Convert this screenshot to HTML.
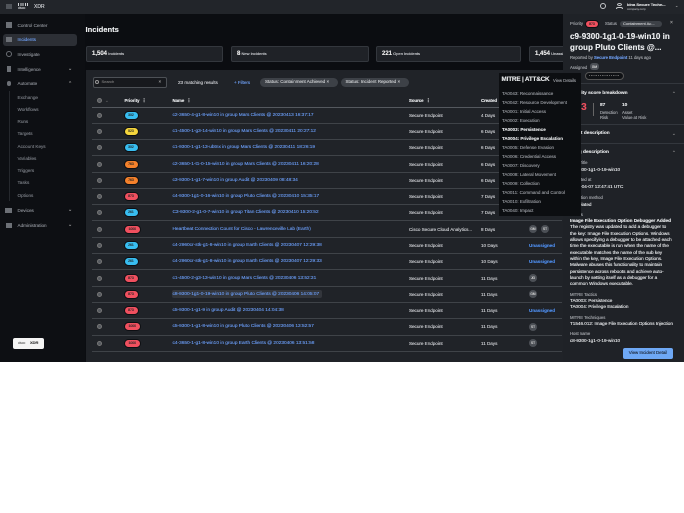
<!DOCTYPE html>
<html><head><meta charset="utf-8">
<style>
html,body{margin:0;padding:0;background:#fff;width:684px;height:513px;overflow:hidden}
#a{position:absolute;left:0;top:0;width:684px;height:362px;overflow:hidden;background:#0b0d11;font-family:"Liberation Sans",sans-serif;font-size:4.5px;color:#d8dade;filter:blur(.2px);-webkit-text-stroke:.12px currentColor}
#a div,#a span.p{position:absolute;white-space:nowrap}
.top{left:0;top:0;width:684px;height:14px;background:#22252a}
.side{left:0;top:14px;width:85px;height:348px;background:#0d0f13}
.n{left:17.5px;color:#8b8f96;font-size:4.6px}
.s{left:17.5px;color:#7b7f86;font-size:4.6px}
.card{top:46px;height:15.5px;background:#1f2227;border:1px solid #33373d;border-radius:2px;box-sizing:border-box;font-size:4px;line-height:13px;padding-left:5px;color:#d0d2d6}
.card b{font-size:6px;color:#eee}
.main{left:86px;top:70px;width:500px;height:292px;background:#202328}
.l{left:92px;width:470px;height:1.3px;background:#3f4348}
.cb{left:97px;width:5px;height:5px;border-radius:50%;background:#54585e;border:.5px solid #777;box-sizing:border-box}
.pill{left:124.5px;width:13px;height:7px;border-radius:4px;color:#222;font-size:3.4px;line-height:7px;text-align:center;box-shadow:0 0 0 1px #0d0f13}
.w{left:124.5px;width:15.5px}
.bl{background:#38bdf0}.ye{background:#f4d53c}.or{background:#f5812b}.re{background:#f0505f}
.t{left:172.5px;color:#6a9cf5;font-size:4.75px}
.so{left:409px;color:#d2d4d8;font-size:4.55px}
.d{left:481px;color:#d2d4d8;font-size:4.55px}
.un{left:529px;color:#4f8ff0;font-weight:bold;font-size:4.6px}
.av{width:8px;height:8px;border-radius:50%;background:#4c5056;color:#ddd;font-size:3.2px;line-height:8px;text-align:center}
.hd{top:98px;color:#eceef0;font-weight:bold;font-size:4.3px}
.chip{top:78px;height:8.5px;background:#3d4147;border-radius:4.5px;font-size:4.5px;line-height:8.5px;padding:0 5px;color:#cfd1d4;box-sizing:border-box}
.mitre{left:499px;top:73px;width:82px;height:143px;background:#0c0e11}
.m{left:502px;color:#9a9da3;font-size:4.5px}
.dr{left:563px;top:14px;width:121px;height:348px;background:#1f2227}
.x{left:570px;color:#e8eaec;font-size:4.6px}
.g{left:570px;color:#a6a9ae;font-size:4.2px}
.sep{left:563px;width:121px;height:1px;background:#33373d}
</style></head><body>
<div id="a">
<div class="top"></div>
<div class="side"></div>
<div style="left:6px;top:4px;width:6px;height:5px;background:#50545a"></div>
<div style="left:18px;top:3px;width:11px;height:3px;background:repeating-linear-gradient(90deg,#cfd1d4 0 .8px,transparent .8px 1.8px)"></div>
<div style="left:18px;top:6px;font-size:3.2px;color:#cfd1d4">cisco</div>
<div style="left:34px;top:3.5px;font-size:5px;color:#d8dade">XDR</div>
<div style="left:600px;top:3px;width:6px;height:6px;border:1px solid #c5c7ca;border-radius:50%;box-sizing:border-box"></div>
<div style="left:617px;top:3px;width:5px;height:3px;border:1px solid #c5c7ca;border-radius:50%;box-sizing:border-box"></div>
<div style="left:616px;top:6.5px;width:7px;height:2.5px;border:1px solid #c5c7ca;border-bottom:0;border-radius:3px 3px 0 0;box-sizing:border-box"></div>
<div style="left:627px;top:1.5px;font-size:4px;font-weight:bold;color:#e0e2e4">Idna Secure Techn...</div>
<div style="left:627px;top:6.5px;font-size:3px;color:#9a9da2">company.corp</div>
<div style="left:675px;top:3px;font-size:4px;color:#aaa">⌄</div>

<div style="left:3px;top:33.5px;width:74px;height:12.5px;background:#2c2f35;border-radius:3px"></div>
<div style="left:6px;top:22px;width:6px;height:6px;background:#6c7076"></div>
<div style="left:6px;top:37px;width:6px;height:5px;background:#6c7076"></div>
<div style="left:6px;top:51px;width:6px;height:6px;border:1px solid #6c7076;border-radius:50%;box-sizing:border-box"></div>
<div style="left:7px;top:66px;width:4px;height:6px;background:#6c7076"></div>
<div style="left:7px;top:81px;width:4px;height:5px;background:#6c7076;border-radius:2px"></div>
<div style="left:5px;top:208px;width:7px;height:5px;background:#6c7076"></div>
<div style="left:6px;top:223px;width:6px;height:5px;background:#6c7076"></div>
<div class="n" style="top:22.5px">Control Center</div>
<div class="n" style="top:37px;color:#6d9df0">Incidents</div>
<div class="n" style="top:51.5px">Investigate</div>
<div class="n" style="top:66.5px">Intelligence</div>
<div style="left:68px;top:66px;color:#aaa;font-size:5px">⌄</div>
<div class="n" style="top:81px">Automate</div>
<div style="left:68px;top:81px;color:#aaa;font-size:5px">⌃</div>
<div style="left:8.5px;top:91px;width:1px;height:110px;background:#25282d"></div>
<div class="s" style="top:94.5px">Exchange</div>
<div class="s" style="top:106.5px">Workflows</div>
<div class="s" style="top:119px">Runs</div>
<div class="s" style="top:131px">Targets</div>
<div class="s" style="top:143.5px">Account Keys</div>
<div class="s" style="top:155.5px">Variables</div>
<div class="s" style="top:168px">Triggers</div>
<div class="s" style="top:180px">Tasks</div>
<div class="s" style="top:192.5px">Options</div>
<div class="n" style="top:208px">Devices</div>
<div style="left:68px;top:207px;color:#aaa;font-size:5px">⌄</div>
<div class="n" style="top:223px">Administration</div>
<div style="left:68px;top:222px;color:#aaa;font-size:5px">⌄</div>
<div style="left:13px;top:337.5px;width:31px;height:11px;background:#f4f4f4;border-radius:2px"></div>
<div style="left:18px;top:340.5px;font-size:3.2px;color:#666">cisco</div>
<div style="left:30px;top:340px;font-size:4px;color:#333;font-weight:bold">XDR</div>

<div style="left:85.5px;top:25px;font-size:7.6px;font-weight:bold;color:#eef0f2">Incidents</div>
<div class="card" style="left:86px;width:137px"><b>1,504</b> Incidents</div>
<div class="card" style="left:231px;width:138px"><b>8</b> New Incidents</div>
<div class="card" style="left:376px;width:145px"><b>221</b> Open Incidents</div>
<div class="card" style="left:529px;width:40px"><b>1,454</b> Unassigned</div>

<div class="main"></div>
<div style="left:92.5px;top:77px;width:74px;height:10.5px;background:#17191d;border:1px solid #4d5156;border-radius:2px;box-sizing:border-box;color:#777;line-height:8.5px;padding-left:8px;font-size:4px">Search</div>
<div style="left:95px;top:80px;width:4px;height:4px;border:.7px solid #999;border-radius:50%;box-sizing:border-box"></div>
<div style="left:158.5px;top:79px;font-size:4.5px;color:#aaa">×</div>
<div style="left:178px;top:79.5px;color:#d2d4d8;font-size:4.6px">23 matching results</div>
<div style="left:234px;top:79.5px;color:#6d9df0;font-size:4.5px">+ Filters</div>
<div class="chip" style="left:260px;width:78px">Status: Containment Achieved ×</div>
<div class="chip" style="left:340.5px;width:68px">Status: Incident Reported ×</div>

<div class="cb" style="top:98px"></div>
<div style="left:105px;top:98px;color:#666">⌄</div>
<div class="hd" style="left:124.5px">Priority &nbsp;⋮</div>
<div class="hd" style="left:172.5px">Name &nbsp;⋮</div>
<div class="hd" style="left:409px">Source &nbsp;⋮</div>
<div class="hd" style="left:481px">Created</div>
<div class="l" style="top:106.5px;background:#54585e"></div>

<div class="l" style="top:122.5px"></div><div class="l" style="top:139px"></div><div class="l" style="top:155px"></div><div class="l" style="top:171.5px"></div><div class="l" style="top:187.5px"></div><div class="l" style="top:204px"></div><div class="l" style="top:220px"></div><div class="l" style="top:236.5px"></div><div class="l" style="top:253px"></div><div class="l" style="top:269px"></div><div class="l" style="top:285.5px"></div><div class="l" style="top:301.5px"></div><div class="l" style="top:318px"></div><div class="l" style="top:334.5px"></div><div class="l" style="top:351px"></div>

<div class="cb" style="top:112.5px"></div><div class="pill bl" style="top:111.5px">302</div><div class="t" style="top:112.5px">c2-3650-4-g1-8-win10 in group Mars Clients @ 20230413 16:37:17</div><div class="so" style="top:112.5px">Secure Endpoint</div><div class="d" style="top:112.5px">4 Days</div>
<div class="cb" style="top:129px"></div><div class="pill ye" style="top:128px">523</div><div class="t" style="top:129px">c1-4500-1-g3-14-win10 in group Mars Clients @ 20230411 20:27:12</div><div class="so" style="top:129px">Secure Endpoint</div><div class="d" style="top:129px">6 Days</div>
<div class="cb" style="top:145px"></div><div class="pill bl" style="top:144px">302</div><div class="t" style="top:145px">c1-9300-1-g1-13-ubtnx in group Mars Clients @ 20230411 18:26:19</div><div class="so" style="top:145px">Secure Endpoint</div><div class="d" style="top:145px">6 Days</div>
<div class="cb" style="top:161.5px"></div><div class="pill or" style="top:160.5px">763</div><div class="t" style="top:161.5px">c2-3650-1-t1-0-15-win10 in group Mars Clients @ 20230411 16:20:28</div><div class="so" style="top:161.5px">Secure Endpoint</div><div class="d" style="top:161.5px">6 Days</div>
<div class="cb" style="top:177.5px"></div><div class="pill or" style="top:176.5px">763</div><div class="t" style="top:177.5px">c3-9300-1-g1-7-win10 in group Audit @ 20230409 08:48:34</div><div class="so" style="top:177.5px">Secure Endpoint</div><div class="d" style="top:177.5px">6 Days</div>
<div class="cb" style="top:194px"></div><div class="pill re" style="top:193px">873</div><div class="t" style="top:194px">c4-9300-1g1-0-16-win10 in group Pluto Clients @ 20230410 15:35:17</div><div class="so" style="top:194px">Secure Endpoint</div><div class="d" style="top:194px">7 Days</div>
<div class="cb" style="top:210px"></div><div class="pill bl" style="top:209px">261</div><div class="t" style="top:210px">C3-9300-2-g1-0-7-win10 in group Titan Clients @ 20230410 15:20:52</div><div class="so" style="top:210px">Secure Endpoint</div><div class="d" style="top:210px">7 Days</div>
<div class="cb" style="top:226.5px"></div><div class="pill re w" style="top:225.5px">1000</div><div class="t" style="top:226.5px">Heartbeat Connection Count for Cisco - Lawrenceville Lab (Earth)</div><div class="so" style="top:226.5px">Cisco Secure Cloud Analytics...</div><div class="d" style="top:226.5px">8 Days</div><div class="av" style="left:529px;top:225px">GM</div><div class="av" style="left:541px;top:225px">ST</div>
<div class="cb" style="top:243px"></div><div class="pill bl" style="top:242px">261</div><div class="t" style="top:243px">c4-2960cr-stk-g1-8-win10 in group Earth Clients @ 20230407 12:29:38</div><div class="so" style="top:243px">Secure Endpoint</div><div class="d" style="top:243px">10 Days</div><div class="un" style="top:243px">Unassigned</div>
<div class="cb" style="top:259px"></div><div class="pill bl" style="top:258px">261</div><div class="t" style="top:259px">c4-2960cr-stk-g1-8-win10 in group Earth Clients @ 20230407 12:29:33</div><div class="so" style="top:259px">Secure Endpoint</div><div class="d" style="top:259px">10 Days</div><div class="un" style="top:259px">Unassigned</div>
<div class="cb" style="top:275.5px"></div><div class="pill re" style="top:274.5px">873</div><div class="t" style="top:275.5px">c1-4500-2-g3-13-win10 in group Mars Clients @ 20230406 13:52:31</div><div class="so" style="top:275.5px">Secure Endpoint</div><div class="d" style="top:275.5px">11 Days</div><div class="av" style="left:529px;top:274px">JG</div>
<div class="cb" style="top:291.5px"></div><div class="pill re" style="top:290.5px">873</div><div style="left:172px;top:290px;width:150px;height:7.5px;background:#33363c;border-radius:2px"></div><div class="t" style="top:291.5px">c8-9300-1g1-0-19-win10 in group Pluto Clients @ 20230406 14:05:07</div><div class="so" style="top:291.5px">Secure Endpoint</div><div class="d" style="top:291.5px">11 Days</div><div class="av" style="left:529px;top:290px">GM</div>
<div class="cb" style="top:308px"></div><div class="pill re" style="top:307px">873</div><div class="t" style="top:308px">c5-9300-1-g1-9 in group Audit @ 20230404 14:04:38</div><div class="so" style="top:308px">Secure Endpoint</div><div class="d" style="top:308px">11 Days</div><div class="un" style="top:308px">Unassigned</div>
<div class="cb" style="top:324px"></div><div class="pill re w" style="top:323px">1000</div><div class="t" style="top:324px">c5-9300-1-g1-8-win10 in group Pluto Clients @ 20230406 13:52:57</div><div class="so" style="top:324px">Secure Endpoint</div><div class="d" style="top:324px">11 Days</div><div class="av" style="left:529px;top:323px">ST</div>
<div class="cb" style="top:340.5px"></div><div class="pill re w" style="top:339.5px">1000</div><div class="t" style="top:340.5px">c4-3650-1-g1-8-win10 in group Earth Clients @ 20230406 13:51:58</div><div class="so" style="top:340.5px">Secure Endpoint</div><div class="d" style="top:340.5px">11 Days</div><div class="av" style="left:529px;top:339px">ST</div>

<div class="dr"></div>
<div class="g" style="top:21px">Priority</div>
<div class="pill re" style="left:586px;top:20.5px;width:12px;height:6px;line-height:6px">873</div>
<div class="g" style="left:605px;top:21px">Status</div>
<div style="left:620px;top:20.5px;width:42px;height:6.5px;border-radius:3px;background:#3d4147;color:#c8cacd;font-size:4px;line-height:6.5px;padding-left:3px;box-sizing:border-box">Containment Ac...</div>
<div style="left:670px;top:20px;color:#aaa;font-size:5px">×</div>
<div style="left:570px;top:30.5px;font-size:8.1px;font-weight:bold;color:#eef0f2;line-height:11px">c9-9300-1g1-0-19-win10 in<br>group Pluto Clients @...</div>
<div class="g" style="top:55px">Reported by <span style="color:#6d9df0;font-weight:bold">Secure Endpoint</span> 11 days ago</div>
<div class="g" style="top:64.5px">Assigned</div>
<div class="av" style="left:590px;top:63px;width:9px;height:7px;border-radius:3px">GM</div>
<div style="left:585px;top:72px;width:39px;height:8px;background:#101215;border:.7px solid #555;border-radius:4px;box-sizing:border-box"></div>
<div style="left:589px;top:75px;width:31px;height:1.3px;background:repeating-linear-gradient(90deg,#666 0 1.2px,transparent 1.2px 2.2px)"></div>
<div class="sep" style="top:83px"></div>
<div style="left:570px;top:91px;font-size:4.8px;font-weight:bold;color:#e4e6e8">Priority score breakdown</div>
<div style="left:672px;top:91px;color:#999;font-size:4.5px">⌃</div>
<div style="left:570px;top:102px;font-size:10px;font-weight:bold;color:#f0505f">873</div>
<div style="left:593px;top:103px;width:1px;height:13px;background:#666"></div>
<div style="left:600px;top:103px;font-weight:bold;font-size:4.8px;color:#e4e6e8">87</div>
<div style="left:622px;top:103px;font-weight:bold;font-size:4.8px;color:#e4e6e8">10</div>
<div class="g" style="left:600px;top:110px;line-height:5px">Detection<br>Risk</div>
<div class="g" style="left:622px;top:110px;line-height:5px">Asset<br>Value at Risk</div>
<div class="sep" style="top:124px"></div>
<div style="left:570px;top:131px;font-size:4.8px;font-weight:bold;color:#e4e6e8">Short description</div>
<div style="left:672px;top:131px;color:#999;font-size:4.5px">⌄</div>
<div class="sep" style="top:143px"></div>
<div style="left:570px;top:150px;font-size:4.8px;font-weight:bold;color:#e4e6e8">Long description</div>
<div style="left:672px;top:150px;color:#999;font-size:4.5px">⌃</div>
<div class="g" style="top:160px">Host Title</div>
<div class="x" style="top:167px">c9-9300-1g1-0-19-win10</div>
<div class="g" style="top:177px">Detected at</div>
<div class="x" style="top:184px">2023-04-07 12:47:41 UTC</div>
<div class="g" style="top:195px">Detection method</div>
<div class="x" style="top:201.5px">Correlated</div>
<div class="g" style="top:212px">Details</div>
<div class="x" style="top:218px;line-height:6.35px;font-size:4.65px"><b>Image File Execution Option Debugger Added</b><br>The registry was updated to add a debugger to<br>the key: Image File Execution Options. Windows<br>allows specifying a debugger to be attached each<br>time the executable is run when the name of the<br>executable matches the name of the sub key<br>within the key, Image File Execution Options.<br>Malware abuses this functionality to maintain<br>persistence across reboots and achieve auto-<br>launch by setting itself as a debugger for a<br>common Windows executable.</div>
<div class="g" style="top:291.5px">MITRE Tactics</div>
<div class="x" style="top:297.5px;line-height:6.4px">TA0003: Persistence<br>TA0004: Privilege Escalation</div>
<div class="g" style="top:314.5px">MITRE Techniques</div>
<div class="x" style="top:320.5px">T1546.012: Image File Execution Options Injection</div>
<div class="g" style="top:331px">Host name</div>
<div class="x" style="top:337.5px">c8-9300-1g1-0-19-win10</div>
<div class="sep" style="top:343.5px"></div>
<div style="left:563px;top:344px;width:121px;height:18px;background:#1f2227"></div>
<div style="left:623px;top:348px;width:50px;height:10.5px;background:#6ea8f5;border-radius:2px;color:#1a2433;font-size:4.4px;line-height:10.5px;text-align:center">View Incident Detail</div>

<div class="mitre"></div>
<div style="left:501.5px;top:76px;font-size:6.4px;font-weight:bold;color:#e8eaec;letter-spacing:-.2px">MITRE | ATT&amp;CK</div>
<div style="left:553px;top:77.5px;color:#9a9da2;font-size:4.2px">View Details</div>
<div class="m" style="top:90.5px">TA0043: Reconnaissance</div>
<div class="m" style="top:99.5px">TA0042: Resource Development</div>
<div class="m" style="top:108.5px">TA0001: Initial Access</div>
<div class="m" style="top:117.5px">TA0002: Execution</div>
<div class="m" style="top:126.5px;color:#e4e6e8;font-weight:bold">TA0003: Persistence</div>
<div class="m" style="top:135.5px;color:#e4e6e8;font-weight:bold">TA0004: Privilege Escalation</div>
<div class="m" style="top:144.5px">TA0005: Defense Evasion</div>
<div class="m" style="top:153.5px">TA0006: Credential Access</div>
<div class="m" style="top:162.5px">TA0007: Discovery</div>
<div class="m" style="top:171.5px">TA0008: Lateral Movement</div>
<div class="m" style="top:180.5px">TA0009: Collection</div>
<div class="m" style="top:189.5px">TA0011: Command and Control</div>
<div class="m" style="top:198.5px">TA0010: Exfiltration</div>
<div class="m" style="top:207.5px">TA0040: Impact</div>
<div style="left:0;top:361.5px;width:89px;height:1px;background:#8a8c8f"></div>
</div>
</body></html>
